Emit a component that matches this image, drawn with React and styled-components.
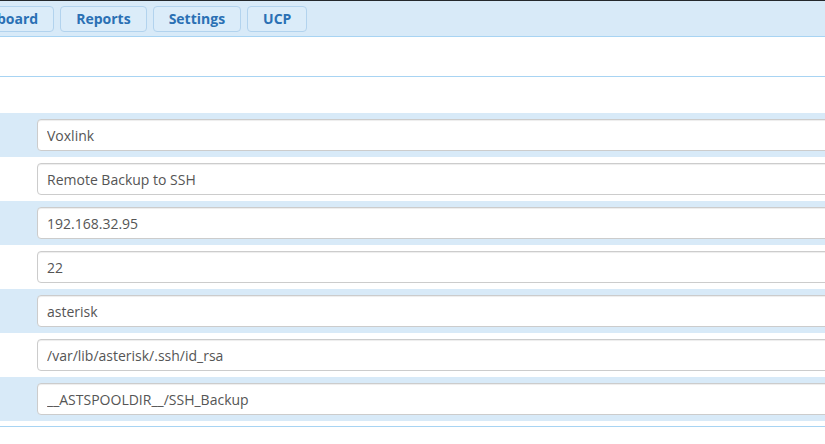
import React from "react";
import styled, { createGlobalStyle } from "styled-components";

const fields = [
    "Voxlink",
    "Remote Backup to SSH",
    "192.168.32.95",
    "22",
    "asterisk",
    "/var/lib/asterisk/.ssh/id_rsa",
    "__ASTSPOOLDIR__/SSH_Backup",
];

const tabs = ["Dashboard", "Reports", "Settings", "UCP"];

export default function App() {
    return (
        <Page>
            <GlobalStyle />
            <TopBar>
                <TabList>
                    {tabs.map((t) => (
                        <Tab key={t}>{t}</Tab>
                    ))}
                </TabList>
            </TopBar>
            <Header />
            <Form>
                {fields.map((value, i) => (
                    <Row key={i} $shaded={i % 2 === 0}>
                        <Field type="text" readOnly value={value} />
                    </Row>
                ))}
            </Form>
            <Footer />
        </Page>
    );
}

const GlobalStyle = createGlobalStyle`
  body {
    margin: 0;
    background: #fff;
    overflow: hidden;
    font-family: "Open Sans", "Noto Sans", sans-serif;
  }
`;

const Page = styled.div`
  width: 825px;
  height: 444px;
  overflow: hidden;
`;

const TopBar = styled.div`
  height: 35px;
  border-top: 1px solid #24282c;
  border-bottom: 1px solid #a8d4f3;
  background: #d8eaf8;
  display: flex;
  align-items: center;
`;

const TabList = styled.div`
  display: flex;
  gap: 6px;
  margin-left: -54px;
`;

const Tab = styled.div`
  height: 24px;
  padding: 0 15px;
  border: 1px solid #b2d3ee;
  border-radius: 4px;
  background: #dbecf9;
  color: #2a70b4;
  font-weight: 700;
  font-size: 14px;
  display: flex;
  align-items: center;
`;

const Header = styled.div`
  height: 39px;
  border-bottom: 1px solid #a8d4f3;
`;

const Form = styled.div`
  padding-top: 36px;
  padding-bottom: 5px;
  border-bottom: 1px solid #a8d4f3;
`;

const Row = styled.div`
  height: 44px;
  padding-left: 37px;
  display: flex;
  align-items: center;
  background: ${(p) => (p.$shaded ? "#d8eaf8" : "#fff")};
`;

const Field = styled.input`
  flex-shrink: 0;
  width: 820px;
  height: 32px;
  box-sizing: border-box;
  padding: 0 9px;
  border: 1px solid #cccccc;
  border-radius: 4px;
  background: #fff;
  box-shadow: inset 0 1px 1px rgba(0, 0, 0, 0.075);
  font-family: "Open Sans", "Noto Sans", sans-serif;
  font-size: 14px;
  color: #555;
  outline: none;
`;

const Footer = styled.div`
  height: 20px;
`;
